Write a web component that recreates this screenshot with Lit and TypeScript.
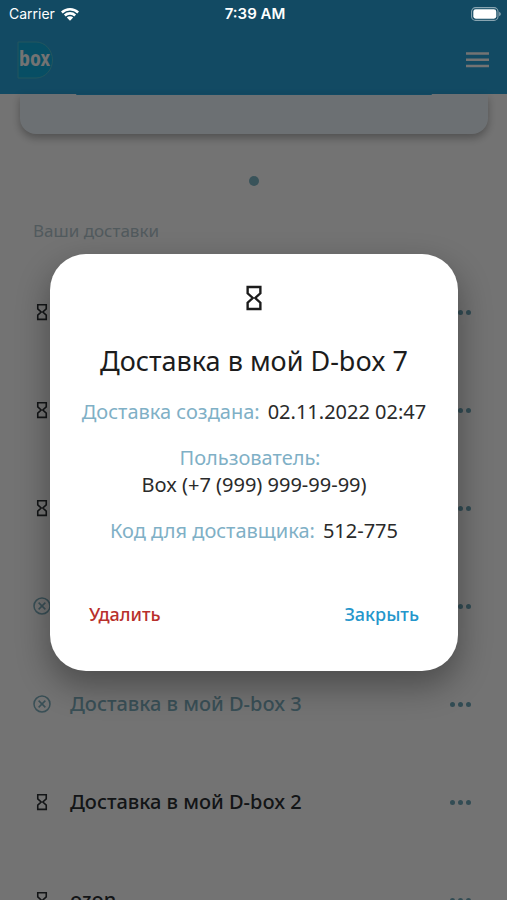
import { LitElement, html, css, svg } from "lit";
import { customElement, property } from "lit/decorators.js";

type Status = "waiting" | "cancelled";

interface Delivery {
  title: string;
  status: Status;
}

const deliveries: Delivery[] = [
  { title: "", status: "waiting" },
  { title: "", status: "waiting" },
  { title: "", status: "waiting" },
  { title: "", status: "cancelled" },
  { title: "Доставка в мой D-box 3", status: "cancelled" },
  { title: "Доставка в мой D-box 2", status: "waiting" },
  { title: "ozon", status: "waiting" },
];

const hourglass = svg`<path d="M6.9 3.2h10.2v5L13 12l4.100 3.800v5H6.900v-5L11 12 6.900 8.200z"
  fill="none" stroke="currentColor" stroke-width="1.900"/>`;

const cancelled = svg`<circle cx="12" cy="12" r="10.4" fill="none" stroke="currentColor" stroke-width="2"/>
  <path d="M7.6 7.6l8.8 8.8M16.4 7.6l-8.8 8.8" fill="none" stroke="currentColor" stroke-width="2"/>`;

@customElement("status-bar")
export class StatusBar extends LitElement {
  static styles = css`
    :host {
      display: grid;
      grid-template-columns: 1fr auto 1fr;
      align-items: center;
      height: 28px;
      padding: 0 6px 0 9px;
      color: #fff;
      font: 400 14px/20px Inter, sans-serif;
    }
    .carrier { display: flex; align-items: center; gap: 6px; }
    .clock { font-size: 15px; font-weight: 600; }
    .battery { justify-self: end; display: block; }
  `;
  render() {
    return html`
      <div class="carrier">
        <span>Carrier</span>
        <svg width="18" height="14" viewBox="0 0 18 14" aria-hidden="true">
          <path d="M0 4.6a12.8 12.8 0 0 1 18 0L16.3 6.4a10.4 10.4 0 0 0-14.6 0z" fill="#fff" />
          <path d="M2.9 7.6a8.7 8.7 0 0 1 12.2 0L13.3 9.4a6.2 6.2 0 0 0-8.6 0z" fill="#fff" />
          <path d="M5.8 10.5a4.6 4.6 0 0 1 6.4 0L9 13.8z" fill="#fff" />
        </svg>
      </div>
      <span class="clock">7:39 AM</span>
      <svg class="battery" width="30" height="14" viewBox="0 0 30 14" aria-hidden="true">
        <rect x="0.6" y="0.6" width="26.4" height="12.8" rx="4" fill="none" stroke="#fff" stroke-opacity=".5" stroke-width="1.1" />
        <rect x="2.3" y="2.3" width="23" height="9.4" rx="2.4" fill="#fff" />
        <path d="M28.2 4.8v4.4q1.6-.7 1.6-2.2t-1.6-2.2z" fill="#fff" fill-opacity=".55" />
      </svg>
    `;
  }
}

@customElement("delivery-row")
export class DeliveryRow extends LitElement {
  @property() name = "";
  @property() status: Status = "waiting";

  static styles = css`
    :host {
      display: flex;
      align-items: center;
      height: 98px;
      padding: 0 32px;
      color: #2c3033;
    }
    :host([status="cancelled"]) { color: #7fb0bf; }
    .icon { display: block; flex: none; width: 20px; height: 20px; }
    .name { flex: 1; margin-left: 18px; font-size: 20px; line-height: 28px; font-weight: 500; }
    .more {
      display: flex;
      align-items: center;
      gap: 3px;
      height: 32px;
      padding: 0 4px;
      border: 0;
      background: none;
    }
    .dot { width: 5px; height: 5px; border-radius: 50%; background: #70a8ba; }
  `;
  render() {
    const off = this.status === "cancelled";
    return html`
      <svg class="icon" viewBox=${off ? "-1 -1 26 26" : "0 0 24 24"} aria-hidden="true">${off ? cancelled : hourglass}</svg>
      <span class="name">${this.name}</span>
      <button class="more" type="button" aria-label="Ещё">
        <span class="dot"></span><span class="dot"></span><span class="dot"></span>
      </button>
    `;
  }
}

@customElement("delivery-dialog")
export class DeliveryDialog extends LitElement {
  static styles = css`
    :host {
      display: flex;
      align-items: center;
      justify-content: center;
      box-sizing: border-box;
      padding: 24px 49px 0 50px;
      background: rgba(0, 0, 0, 0.55);
    }
    .panel {
      position: static;
      display: flex;
      flex-direction: column;
      align-items: center;
      box-sizing: border-box;
      width: 100%;
      max-width: 480px;
      margin: 0;
      padding: 29px 24px 37px;
      border: 0;
      border-radius: 36px;
      background: #fff;
      box-shadow: 0 14px 32px 2px rgba(0, 0, 0, 0.32);
      color: #2a2a2a;
      font-size: 20px;
      line-height: 27px;
      text-align: center;
    }
    .icon { display: block; width: 30px; height: 30px; color: #1c1c1c; }
    .title { margin: 30px 0 19px; font-size: 27px; line-height: 36px; font-weight: 400; color: #1c1c1c; }
    .details { display: flex; flex-direction: column; gap: 19px; margin: 0; }
    .pair { display: flex; justify-content: center; }
    .stacked { flex-direction: column; }
    .label { padding-right: 8px; color: #7fb0c6; }
    .value { margin: 0; }
    .actions { display: flex; justify-content: space-between; align-self: stretch; margin-top: 50px; }
    .action {
      padding: 6px 15px;
      border: 0;
      background: none;
      font: inherit;
      font-size: 18px;
      line-height: 28px;
      font-weight: 500;
    }
    .delete { color: #b8302c; }
    .close { color: #2596cb; }
  `;
  render() {
    return html`
      <dialog class="panel" open aria-labelledby="title">
        <svg class="icon" viewBox="0 0 24 24" aria-hidden="true">${hourglass}</svg>
        <h2 class="title" id="title">Доставка в мой D-box 7</h2>
        <dl class="details">
          <div class="pair">
            <dt class="label">Доставка создана:</dt>
            <dd class="value">02.11.2022 02:47</dd>
          </div>
          <div class="pair stacked">
            <dt class="label">Пользователь:</dt>
            <dd class="value">Box (+7 (999) 999-99-99)</dd>
          </div>
          <div class="pair">
            <dt class="label">Код для доставщика:</dt>
            <dd class="value">512-775</dd>
          </div>
        </dl>
        <div class="actions">
          <button class="action delete" type="button">Удалить</button>
          <button class="action close" type="button">Закрыть</button>
        </div>
      </dialog>
    `;
  }
}

@customElement("app-root")
export class AppRoot extends LitElement {
  static styles = css`
    :host {
      display: block;
      position: relative;
      height: 100vh;
      overflow: hidden;
      background: #fff;
      font-family: "Noto Sans", "Open Sans", sans-serif;
    }
    .header {
      display: flex;
      align-items: center;
      justify-content: space-between;
      padding: 38px 18px 12px 15px;
      background: #28a4dc;
    }
    .logo { display: block; width: 40px; height: 44px; }
    .logo-text { font: 700 22px "Liberation Sans Narrow", "Open Sans Condensed", "Liberation Sans", sans-serif; }
    .menu { display: block; padding: 0; border: 0; background: none; }
    .menu-icon { display: block; }
    .card {
      height: 40px;
      margin: 0 19px 0 20px;
      border-radius: 0 0 16px 16px;
      background: #f0f9ff;
      box-shadow: 0 4px 8px rgba(0, 0, 0, 0.3);
    }
    .card-action { height: 1px; margin: 0 56px; border-radius: 0 0 8px 8px; background: #28a4dc; }
    .pager { display: flex; justify-content: center; padding: 42px 0 33px; }
    .page { width: 10px; height: 10px; border-radius: 50%; background: #7fb8c8; }
    .section { margin: 0 33px; font-size: 17px; line-height: 24px; font-weight: 400; color: #b4c7cf; }
    .list { margin: 0; padding: 20px 0 0; list-style: none; }
    .overlay { position: absolute; inset: 0; }
    .system { position: absolute; inset: 0 0 auto; }
  `;
  render() {
    return html`
      <header class="header">
        <svg class="logo" viewBox="0 0 40 44" role="img" aria-label="box">
          <path d="M3 4h18a16.500 18 0 0 1 0 36H3z" fill="#10aede" stroke="#4fbdd0" stroke-width="1" />
          <text class="logo-text" x="4" y="28" fill="#fff">box</text>
        </svg>
        <button class="menu" type="button" aria-label="Меню">
          <svg class="menu-icon" width="23" height="16" viewBox="0 0 23 16" aria-hidden="true">
            <path d="M0 1.500h23M0 7.800h23M0 14h23" stroke="#fff" stroke-width="2.400" />
          </svg>
        </button>
      </header>
      <main>
        <div class="card"><div class="card-action"></div></div>
        <div class="pager"><span class="page"></span></div>
        <h1 class="section">Ваши доставки</h1>
        <ul class="list">
          ${deliveries.map(
            (d) => html`<li><delivery-row name=${d.title} status=${d.status}></delivery-row></li>`
          )}
        </ul>
      </main>
      <delivery-dialog class="overlay"></delivery-dialog>
      <status-bar class="system"></status-bar>
    `;
  }
}
